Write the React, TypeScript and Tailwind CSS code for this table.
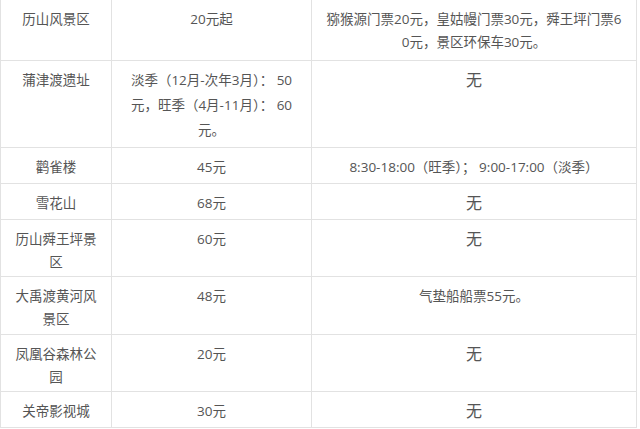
import React from 'react'

type Cell = { lines: string[]; big?: boolean; loose?: boolean }
type Row = { h: string; cells: [Cell, Cell, Cell] }

const none: Cell = { lines: ['无'], big: true }

const rows: Row[] = [
  {
    h: 'h-[61px]',
    cells: [
      { lines: ['历山风景区'] },
      { lines: ['20元起'] },
      { lines: ['猕猴源门票20元，皇姑幔门票30元，舜王坪门票6', '0元，景区环保车30元。'] },
    ],
  },
  {
    h: 'h-[87px]',
    cells: [
      { lines: ['蒲津渡遗址'] },
      { lines: ['淡季（12月-次年3月）： 50', '元，旺季（4月-11月）： 60', '元。'], loose: true },
      none,
    ],
  },
  {
    h: 'h-[36px]',
    cells: [
      { lines: ['鹳雀楼'] },
      { lines: ['45元'] },
      { lines: ['8:30-18:00（旺季）； 9:00-17:00（淡季）'] },
    ],
  },
  { h: 'h-[36px]', cells: [{ lines: ['雪花山'] }, { lines: ['68元'] }, none] },
  { h: 'h-[57px]', cells: [{ lines: ['历山舜王坪景', '区'] }, { lines: ['60元'] }, none] },
  {
    h: 'h-[58px]',
    cells: [{ lines: ['大禹渡黄河风', '景区'] }, { lines: ['48元'] }, { lines: ['气垫船船票55元。'] }],
  },
  { h: 'h-[57px]', cells: [{ lines: ['凤凰谷森林公', '园'] }, { lines: ['20元'] }, none] },
  { h: 'h-[36px]', cells: [{ lines: ['关帝影视城'] }, { lines: ['30元'] }, none] },
]

function TableCell({ cell, h }: { cell: Cell; h: string }) {
  const text = cell.big
    ? 'text-[16px] leading-[23px] pt-[8px]'
    : cell.loose
      ? 'text-[13.5px] leading-[25px] pt-[7px]'
      : 'text-[13.5px] leading-[22.5px] pt-[8px]'
  return (
    <div className={`${h} ${text} border-r border-b border-[#e2e2e2] px-2 text-center whitespace-nowrap`}>
      {cell.lines.map((l, i) => (
        <div key={i}>{l}</div>
      ))}
    </div>
  )
}

export default function App() {
  return (
    <div
      className="h-[429px] w-[640px] overflow-hidden bg-white text-[#555]"
      style={{ fontFamily: '"Open Sans", "Noto Sans CJK SC", sans-serif' }}
    >
      <div className="grid w-[636px] grid-cols-[111px_200px_325px] border-l border-[#e2e2e2]">
        {rows.map((r, ri) =>
          r.cells.map((c, ci) => <TableCell key={`${ri}-${ci}`} cell={c} h={r.h} />),
        )}
      </div>
    </div>
  )
}
